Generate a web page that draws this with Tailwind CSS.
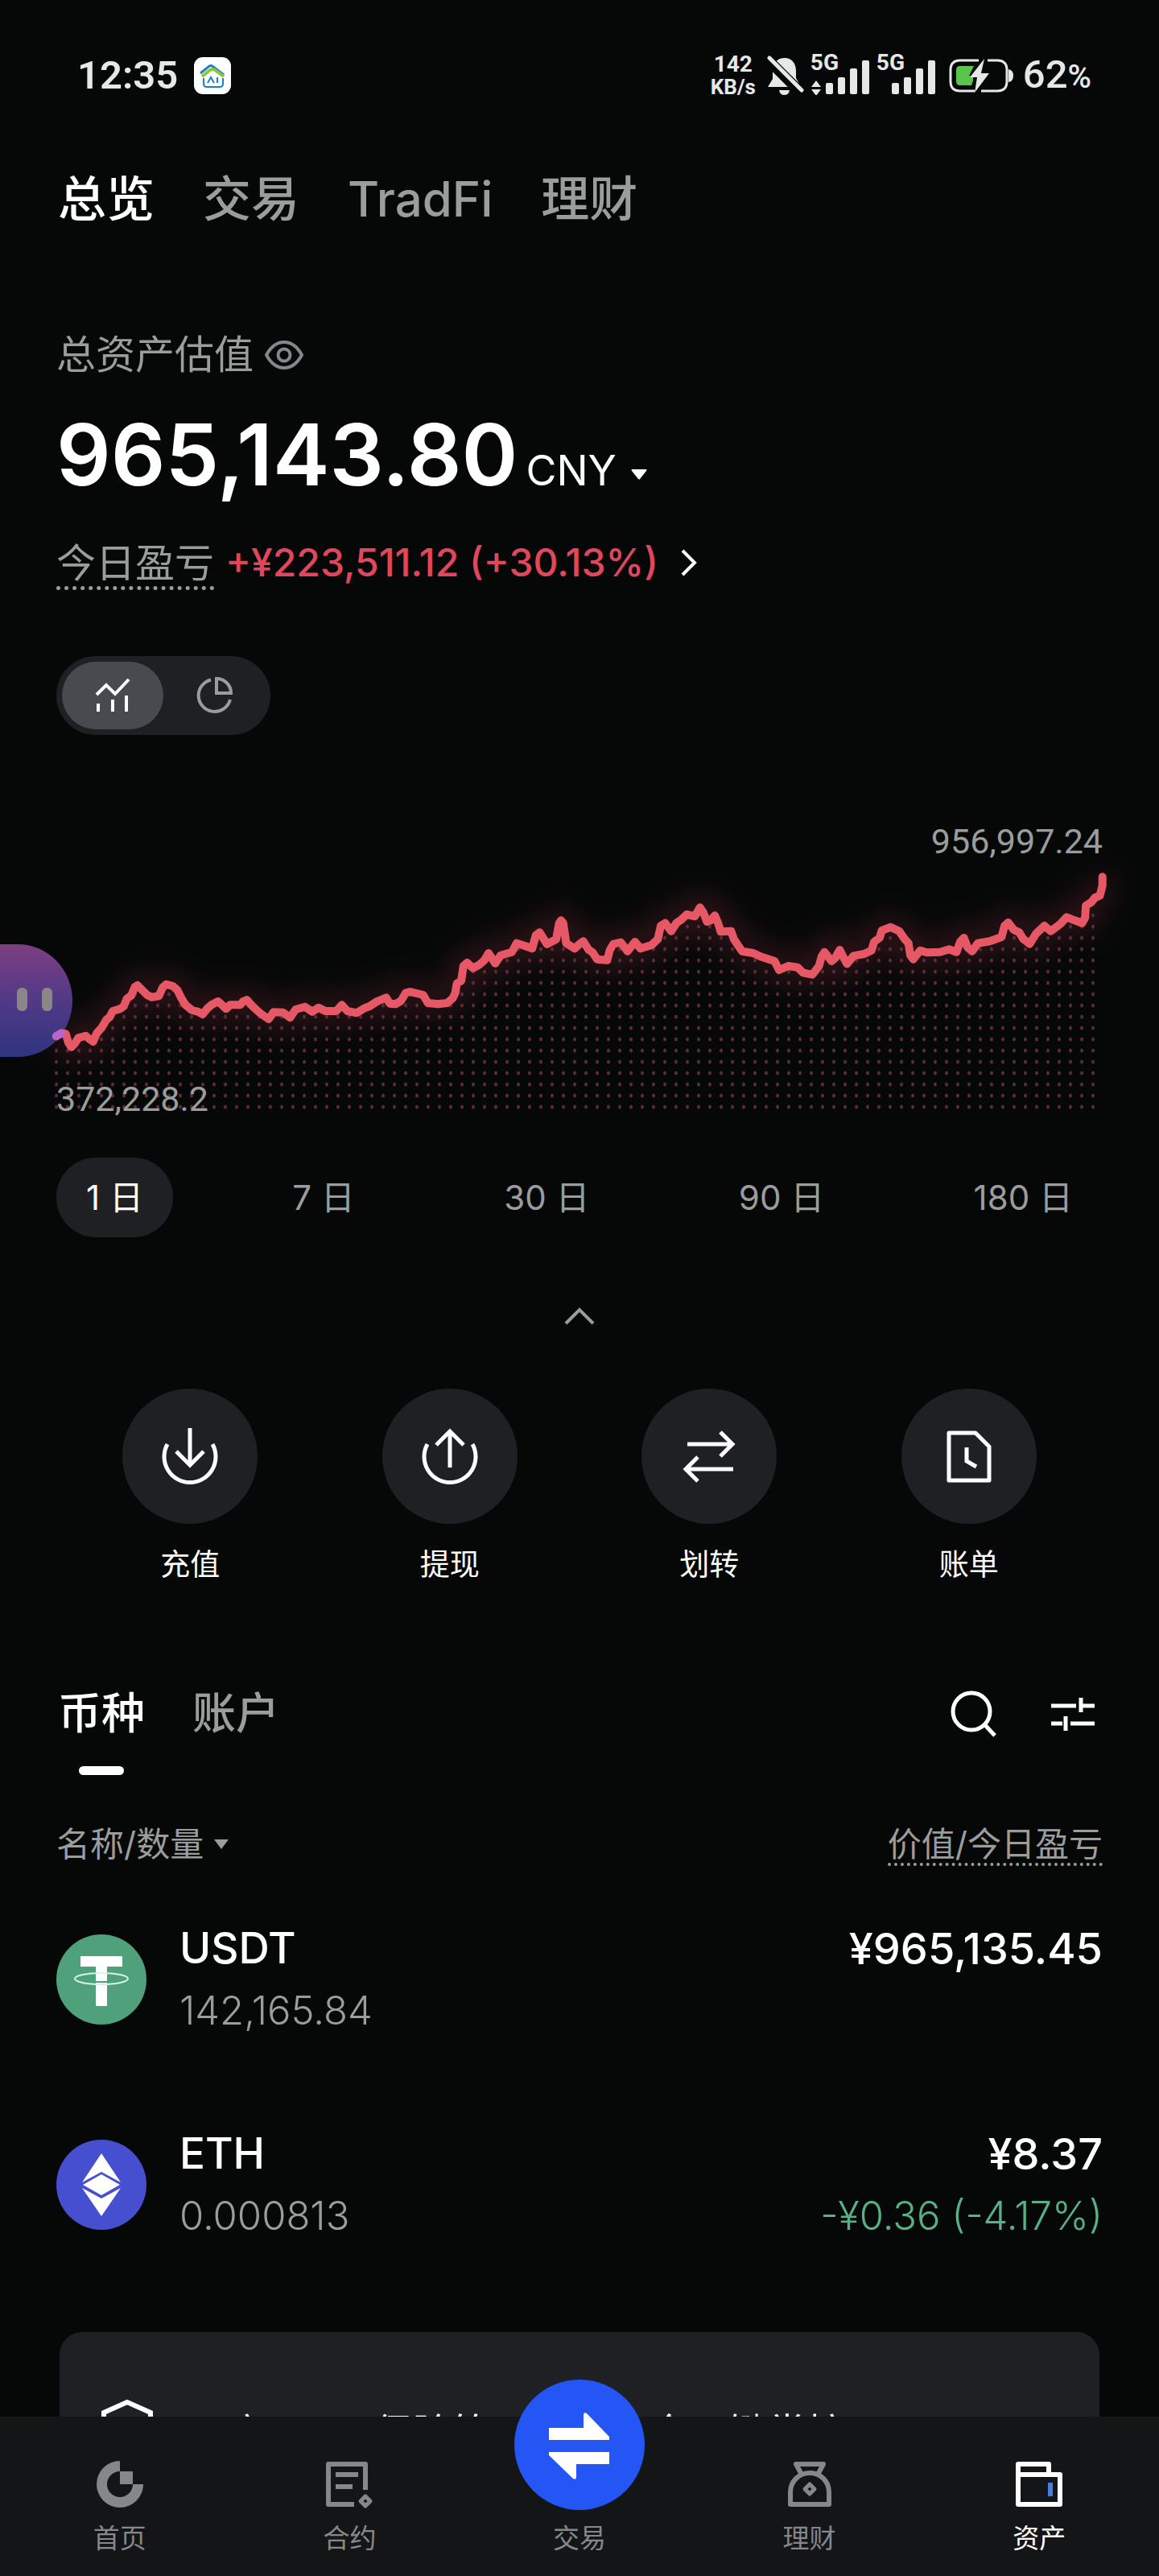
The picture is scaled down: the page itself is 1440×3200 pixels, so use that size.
<!DOCTYPE html>
<html lang="zh-CN">
<head>
    <meta charset="UTF-8">
    <meta name="viewport" content="width=device-width, initial-scale=1.0">
    <title>资产总览</title>
    <script src="https://cdn.jsdelivr.net/npm/@tailwindcss/browser@4"></script>
</head>
<body class="bg-[#060808] text-white font-['Inter','Noto_Sans_CJK_SC',sans-serif]">
<div class="relative min-h-screen overflow-hidden">

    <!-- barra de status -->
    <div class="flex h-[122px] items-center justify-between pt-[66px] pl-24 pr-[84px] text-[#e6e8e7]">
        <div class="flex items-center gap-5">
            <span class="text-[49px] leading-[56px] font-semibold font-['Roboto']">12:35</span>
            <svg class="size-[46px]" viewBox="0 0 46 46" fill="none">
                <rect width="46" height="46" rx="11" fill="#fff"/>
                <path d="M8 20l10-8q3-3 6 0l13 10" stroke="#1f7fc4" stroke-width="3"/>
                <path d="M10 24l10-8q3-2 6 0l11 8" stroke="#8cc63f" stroke-width="4"/>
                <path d="M12 26v7q0 4 4 4h16q4 0 4-4v-7" stroke="#1f7fc4" stroke-width="2"/>
                <path d="M17 32l4-7 4 7M29 25v7" stroke="#1f7fc4" stroke-width="2"/>
            </svg>
        </div>
        <div class="flex items-center">
            <div class="flex w-[60px] flex-col items-center font-bold font-['Roboto']">
                <span class="text-[28px] leading-7">142</span>
                <span class="text-[26px] leading-7">KB/s</span>
            </div>
            <svg class="ml-3 h-[50px] w-[46px]" viewBox="0 0 46 50">
                <path d="M7 29V20C7 9 13 3 22 3s14 7 14 16v9l6 11H1z" fill="#e6e8e7"/>
                <path d="M15 43h13q-1 6-6.500 6T15 43z" fill="#e6e8e7"/>
                <path d="M-2 2L42 46" stroke="#060808" stroke-width="13"/>
                <path d="M3 3L43 43" stroke="#e6e8e7" stroke-width="5" stroke-linecap="round"/>
            </svg>
            <div class="relative ml-2">
                <span class="absolute -top-1 left-0 text-[28px] leading-6 font-bold font-['Roboto']">5G</span>
                <svg class="h-12 w-[74px]" viewBox="0 0 74 48" fill="#e6e8e7">
                    <path d="M1 38l6-8 6 8zM1 41h12l-6 8z"/>
                    <rect x="19" y="33" width="9" height="14" rx="2"/><rect x="34" y="26" width="9" height="21" rx="2"/>
                    <rect x="49" y="15" width="9" height="32" rx="2"/><rect x="64" y="5" width="9" height="42" rx="2"/>
                </svg>
            </div>
            <div class="relative ml-2">
                <span class="absolute -top-1 left-0 text-[28px] leading-6 font-bold font-['Roboto']">5G</span>
                <svg class="h-12 w-[74px]" viewBox="0 0 74 48" fill="#e6e8e7">
                    <rect x="19" y="33" width="9" height="14" rx="2"/><rect x="34" y="26" width="9" height="21" rx="2"/>
                    <rect x="49" y="15" width="9" height="32" rx="2"/><rect x="64" y="5" width="9" height="42" rx="2"/>
                </svg>
            </div>
            <svg class="ml-4 h-[42px] w-20" viewBox="0 0 80 42" fill="none">
                <path d="M37 2H14Q2 2 2 14v14q0 12 12 12h18M48 2h12q12 0 12 12v14q0 12-12 12H40" stroke="#e6e8e7" stroke-width="3"/>
                <path d="M14 9h17L25 21l5 2v4l-2 6H14q-5 0-5-5V14q0-5 5-5z" fill="#5ac54b"/>
                <path d="M44 0L26 23h9L32 42 50 18H40z" fill="#e6e8e7"/>
                <path d="M74 13q6 1 6 8t-6 8z" fill="#e6e8e7"/>
            </svg>
            <span class="ml-3 text-[49px] leading-[56px] font-medium font-['Roboto']">62<span class="text-[40px]">%</span></span>
        </div>
    </div>

    <nav class="mt-[89px] flex gap-[60px] px-[72px] text-[60px] leading-[72px] font-medium text-[#9b9d9d]">
        <a href="#" class="text-white">总览</a>
        <a href="#">交易</a>
        <a href="#">TradFi</a>
        <a href="#">理财</a>
    </nav>

    <!-- patrimônio total -->
    <section class="mt-[130px] px-[70px]">
        <div class="flex items-center gap-[14px] text-[49px] leading-[56px] text-[#9b9d9d]">
            <span>总资产估值</span>
            <button aria-label="隐藏金额">
                <svg class="h-9 w-12" viewBox="0 0 48 36" fill="none" stroke="#85878a" stroke-width="4" stroke-linejoin="round">
                    <path d="M2 18C8 7 15 2 24 2s16 5 22 16c-6 11-13 16-22 16S8 29 2 18z"/>
                    <circle cx="24" cy="18" r="7.500"/>
                </svg>
            </button>
        </div>
        <div class="mt-[43px] flex items-baseline">
            <span class="text-[106px] leading-[106px] font-semibold">965,143.80</span>
            <button class="ml-[10px] flex items-center gap-[18px] text-[52px] leading-[56px]">CNY
                <svg class="mt-2 h-[13px] w-5" viewBox="0 0 20 13"><path d="M1 0h18q1 1 0 2l-8 10q-1 1-2 0L1 2Q0 1 1 0z" fill="#fff"/></svg>
            </button>
        </div>
        <div class="mt-[54px] flex items-start">
            <span class="border-b-[5px] border-dotted border-[#9b9d9d] text-[49px] leading-[56px] text-[#9b9d9d]">今日盈亏</span>
            <a href="#" class="ml-[14px] flex items-center gap-[26px] text-[48px] leading-[54px] font-medium text-[#e0465c]">+¥223,511.12 (+30.13%)
                <svg class="h-9 w-6" viewBox="0 0 24 36" fill="none" stroke="#fff" stroke-width="4"><path d="M4 3l15 15L4 33"/></svg>
            </a>
        </div>
        <div class="mt-[82px] inline-flex rounded-full bg-[#1f2024] p-[7px]">
            <button aria-label="走势" class="flex h-[84px] w-[126px] items-center justify-center rounded-full bg-[#494950]">
                <svg class="h-11 w-11" viewBox="0 0 44 44" fill="none" stroke="#fff" stroke-width="4">
                    <path d="M2 21L14 9l11 11L42 2M4 32v10M22 27v15M39 22v20"/>
                </svg>
            </button>
            <button aria-label="分布" class="flex h-[84px] w-[126px] items-center justify-center">
                <svg class="size-12" viewBox="0 0 48 48" fill="none" stroke="#9b9d9d" stroke-width="4">
                    <path d="M20 4.500A20 20 0 1 0 44 29"/>
                    <path d="M27 3v18h18A18 18 0 0 0 27 3z"/>
                </svg>
            </button>
        </div>
    </section>

    <!-- gráfico -->
    <section class="relative mt-[108px]">
        <p class="px-[70px] text-right text-[43px] leading-[49px] text-[#9b9d9d] font-['Roboto']">956,997.24</p>
        <svg class="block h-auto w-full overflow-visible" viewBox="0 0 1440 320" fill="none">
            <defs>
                <linearGradient id="mascote" x1="0" y1="0" x2="0" y2="1">
                    <stop offset="0" stop-color="#7d3f80"/>
                    <stop offset=".45" stop-color="#553a87"/>
                    <stop offset="1" stop-color="#2f3480"/>
                </linearGradient>
                <pattern id="pontos" x="63" y="4" width="14" height="14" patternUnits="userSpaceOnUse">
                    <ellipse cx="7" cy="7" rx="2" ry="2.500" fill="#5c2c36"/>
                </pattern>
                <filter id="brilho" x="0" y="-80" width="1440" height="420" filterUnits="userSpaceOnUse">
                    <feGaussianBlur stdDeviation="18"/>
                </filter>
            </defs>
            <path id="glow" stroke="#e0465c" stroke-opacity=".22" stroke-width="24" filter="url(#brilho)"/>
            <path id="area" fill="url(#pontos)"/>
            <path d="M0 103h22a68 70 0 0 1 0 140H0z" fill="url(#mascote)"/>
            <rect x="21" y="157" width="13" height="29" rx="6" fill="#8b8788"/>
            <rect x="52" y="157" width="13" height="29" rx="6" fill="#8b8788"/>
            <path id="linha" stroke="#e65866" stroke-width="10" stroke-linecap="round" stroke-linejoin="round"/>
            <path d="M70 217l6-3" stroke="#b866cf" stroke-width="10" stroke-linecap="round"/>
        </svg>
        <p class="absolute bottom-0 left-[70px] text-[43px] leading-[49px] text-[#9b9d9d] font-['Roboto']">372,228.2</p>
    </section>

    <div class="mt-12 flex justify-between px-[70px] text-[42px] leading-[98px] text-[#9b9d9d]">
        <button class="rounded-full bg-[#1f2024] px-[37px] pt-px text-white">1 日</button>
        <button class="px-[37px] pt-px">7 日</button>
        <button class="px-[37px] pt-px">30 日</button>
        <button class="px-[37px] pt-px">90 日</button>
        <button class="px-[37px] pt-px">180 日</button>
    </div>

    <button aria-label="收起" class="mx-auto mt-[78px] block">
        <svg class="h-10 w-10" viewBox="0 0 40 40" fill="none" stroke="#9b9d9d" stroke-width="4"><path d="M3 29l17-17 17 17"/></svg>
    </button>

    <!-- ações -->
    <div class="mt-[70px] grid grid-cols-4 px-[75px] text-[37px] leading-[48px]">
        <button class="flex flex-col items-center gap-[27px]">
            <span class="flex size-[168px] items-center justify-center rounded-full bg-[#1f2024]">
                <svg class="size-[84px]" viewBox="0 0 84 84" fill="none" stroke="#fff" stroke-width="5">
                    <path d="M14 27a32 32 0 1 0 56 0M42 7v46M25 36l17 17 17-17"/>
                </svg>
            </span>
            充值
        </button>
        <button class="flex flex-col items-center gap-[27px]">
            <span class="flex size-[168px] items-center justify-center rounded-full bg-[#1f2024]">
                <svg class="size-[84px]" viewBox="0 0 84 84" fill="none" stroke="#fff" stroke-width="5">
                    <path d="M14 27a32 32 0 1 0 56 0M42 56V10M25 28l17-17 17 17"/>
                </svg>
            </span>
            提现
        </button>
        <button class="flex flex-col items-center gap-[27px]">
            <span class="flex size-[168px] items-center justify-center rounded-full bg-[#1f2024]">
                <svg class="size-[84px]" viewBox="0 0 84 84" fill="none" stroke="#fff" stroke-width="5">
                    <path d="M15 27h55M56 12l15 15-15 15M72 58H14M28 43L13 58l15 15"/>
                </svg>
            </span>
            划转
        </button>
        <button class="flex flex-col items-center gap-[27px]">
            <span class="flex size-[168px] items-center justify-center rounded-full bg-[#1f2024]">
                <svg class="size-[84px]" viewBox="0 0 84 84" fill="none" stroke="#fff" stroke-width="5">
                    <path d="M17 13h33l17 17v42H17z" stroke-linejoin="round"/><path d="M39 31v17l12 7"/>
                </svg>
            </span>
            账单
        </button>
    </div>

    <!-- abas moeda / conta -->
    <div class="mt-[129px] flex items-start justify-between px-[72px]">
        <div class="flex gap-[59px] text-[54px] leading-[64px] font-medium text-[#9b9d9d]">
            <button class="flex flex-col items-center gap-[33px] text-white">币种
                <span class="h-[11px] w-14 rounded-full bg-white"></span>
            </button>
            <button class="self-start">账户</button>
        </div>
        <div class="flex h-16 items-center gap-[66px]">
            <button aria-label="搜索">
                <svg class="size-[60px]" viewBox="0 0 60 60" fill="none" stroke="#fff" stroke-width="5"><circle cx="27" cy="27" r="23"/><path d="M43 43l13 14"/></svg>
            </button>
            <button aria-label="筛选" class="mr-2">
                <svg class="h-11 w-[54px]" viewBox="0 0 54 44" fill="none" stroke="#fff" stroke-width="5"><path d="M0 12h31M37 2v18M37 12h17M0 34h14M18 25v18M24 34h30"/></svg>
            </button>
        </div>
    </div>

    <div class="mt-[63px] px-[70px]">
        <table class="w-full">
            <thead class="text-[42px] leading-[46px] text-[#9b9d9d]">
            <tr>
                <th class="pb-[13px] text-left align-top font-normal">
                    <button class="flex items-center gap-3">名称/数量
                        <svg class="h-3 w-5" viewBox="0 0 20 12"><path d="M1 0h18l-9 12z" fill="#9b9d9d"/></svg>
                    </button>
                </th>
                <th class="pb-[13px] text-right align-top font-normal">
                    <span class="inline-block border-b-4 border-dotted border-[#9b9d9d]">价值/今日盈亏</span>
                </th>
            </tr>
            </thead>
            <tbody class="leading-[77px]">
            <tr class="h-[255px]">
                <td>
                    <div class="flex items-center gap-[41px]">
                        <svg class="size-28" viewBox="0 0 112 112" fill="none">
                            <circle cx="56" cy="56" r="56" fill="#4fa17c"/>
                            <path d="M30 27h52v13H63v49H49V40H30z" fill="#fff"/>
                            <path d="M49 59h14" stroke="#4fa17c" stroke-width="2"/>
                            <ellipse cx="56" cy="55" rx="33" ry="7" stroke="#d8f3e6" stroke-width="2"/>
                        </svg>
                        <div>
                            <p class="text-[53px] font-medium">USDT</p>
                            <p class="text-[49px] font-light text-[#9b9d9d]">142,165.84</p>
                        </div>
                    </div>
                </td>
                <td class="text-right">
                    <p class="min-h-[154px] text-[54px] font-medium">¥965,135.45</p>
                </td>
            </tr>
            <tr class="h-[255px]">
                <td>
                    <div class="flex items-center gap-[41px]">
                        <svg class="size-28" viewBox="0 0 112 112">
                            <circle cx="56" cy="56" r="56" fill="#464fd0"/>
                            <path d="M56 17l24 36-24-13-24 13zM56 43l23 13-23 13-23-13zM56 95L32 60l24 13 24-13z" fill="#fff"/>
                        </svg>
                        <div>
                            <p class="text-[53px] font-medium">ETH</p>
                            <p class="text-[49px] font-light text-[#9b9d9d]">0.000813</p>
                        </div>
                    </div>
                </td>
                <td class="text-right">
                    <p class="text-[54px] font-medium">¥8.37</p>
                    <p class="text-[49px] font-light text-[#56b286]">-¥0.36 (-4.17%)</p>
                </td>
            </tr>
            </tbody>
        </table>
    </div>

    <a href="#" class="mx-[74px] mt-14 flex items-start gap-11 rounded-[28px] bg-[#1f2023] px-[52px] pt-[83px] pb-16 text-[49px] leading-[64px]">
        <svg class="h-[72px] w-16" viewBox="0 0 64 72" fill="none" stroke="#fff" stroke-width="6"><path d="M3 52V17L32 4l29 13v35L32 68z"/></svg>
        <span class="mt-[11px]">开启 OKX 保险箱，资金安全一键掌控</span>
    </a>

    <!-- navegação inferior -->
    <nav class="fixed inset-x-0 bottom-0 grid h-[198px] grid-cols-5 bg-[#141517] px-[6px] pt-[52px] text-[33px] leading-[44px] text-[#85878a]">
        <a href="#" class="flex flex-col items-center gap-[13px]">
            <svg class="size-16" viewBox="0 0 64 64" fill="#85878a">
                <path d="M32 3A29 29 0 1 0 61 32H48A16 16 0 1 1 32 16z"/><path d="M32 16h16v16H32z"/>
            </svg>
            首页
        </a>
        <a href="#" class="flex flex-col items-center gap-[13px]">
            <svg class="size-16" viewBox="0 0 64 64" fill="none" stroke="#85878a" stroke-width="6" stroke-linejoin="round">
                <path d="M38 57H6V7h46v32M15 20h28M15 35h21"/><path d="M52 47l6 6-6 6-6-6z" stroke-width="5"/>
            </svg>
            合约
        </a>
        <a href="#" class="relative flex flex-col items-center pt-[77px]">
            <svg class="absolute -top-[98px] size-[162px]" viewBox="0 0 162 162">
                <circle cx="81" cy="81" r="81" fill="#2456f6"/>
                <path d="M43 60h43V43q1-3 4-1l28 29v4H43zM118 105H77v17q-1 3-4 1L43 94v-4h75z" fill="#fff"/>
            </svg>
            交易
        </a>
        <a href="#" class="flex flex-col items-center gap-[13px]">
            <svg class="size-16" viewBox="0 0 64 64" fill="none" stroke="#85878a" stroke-width="6" stroke-linejoin="round">
                <path d="M22 20L15 7h34l-7 13"/><path d="M8 57V42C8 28 19 18 32 18s24 10 24 24v15z"/><path d="M32 32l6 6-6 6-6-6z" stroke-width="5"/>
            </svg>
            理财
        </a>
        <a href="#" class="flex flex-col items-center gap-[13px] text-white">
            <svg class="size-16" viewBox="0 0 64 64" fill="none" stroke="#fff" stroke-width="6" stroke-linejoin="round">
                <path d="M6 20V7h38v13M6 20h52v37H6z"/><path d="M46 30v17" stroke="#4a7de0"/>
            </svg>
            资产
        </a>
    </nav>
</div>

<script>

//pontos da série do dia: x em uma grade de 3136, y em 1/3 de pixel
const serie = [
  [152,862],[165,850],[178,853],[185,885],[193,902],[203,888],[212,868],[232,860],[240,870],[252,882],[262,850],[275,830],
  [288,800],[297,790],[305,768],[325,760],[335,750],[343,722],[355,710],[365,678],[372,672],[385,690],[398,708],[410,716],
  [430,712],[440,680],[450,668],[468,675],[480,690],[490,718],[502,745],[520,765],[535,770],[548,780],[560,760],[572,745],
  [590,732],[603,748],[612,760],[622,745],[650,745],[658,732],[668,726],[682,748],[695,765],[708,780],[727,798],[740,772],
  [765,773],[785,792],[800,762],[825,752],[845,770],[862,755],[880,768],[910,768],[925,745],[940,768],[965,775],[985,758],
  [1000,750],[1020,732],[1045,718],[1055,740],[1070,742],[1085,730],[1098,700],[1110,696],[1145,708],[1158,738],[1185,742],
  [1210,738],[1225,720],[1232,700],[1236,665],[1248,655],[1254,600],[1264,588],[1280,608],[1297,595],[1310,580],[1322,552],
  [1340,590],[1355,560],[1385,548],[1398,515],[1420,525],[1440,535],[1450,485],[1460,475],[1480,518],[1505,500],[1513,440],
  [1518,430],[1524,440],[1532,515],[1555,535],[1568,518],[1578,508],[1593,540],[1603,548],[1616,575],[1643,578],[1650,540],
  [1660,518],[1680,512],[1698,545],[1718,510],[1733,535],[1763,522],[1780,500],[1788,450],[1800,440],[1816,470],[1830,440],
  [1843,428],[1858,408],[1880,415],[1894,382],[1903,400],[1913,435],[1923,430],[1934,412],[1943,440],[1950,472],[1978,470],
  [1986,500],[1998,525],[2008,545],[2038,552],[2058,565],[2096,582],[2108,615],[2133,600],[2158,605],[2173,625],[2198,632],
  [2216,600],[2223,565],[2231,548],[2250,582],[2260,570],[2272,540],[2280,562],[2292,592],[2310,562],[2338,555],[2358,542],
  [2365,510],[2380,495],[2386,468],[2410,455],[2433,470],[2448,500],[2458,515],[2463,560],[2471,575],[2490,542],[2508,550],
  [2543,548],[2568,538],[2588,548],[2598,510],[2608,495],[2618,530],[2630,545],[2646,515],[2678,508],[2710,492],[2718,450],
  [2728,438],[2743,465],[2758,475],[2768,498],[2786,518],[2803,480],[2826,450],[2843,470],[2868,445],[2886,418],[2908,430],
  [2928,440],[2936,420],[2938,375],[2953,362],[2963,345],[2976,338],[2983,300],[2983,268]
];

//desenha a linha, o brilho e a área pontilhada
const pontos = serie.map(([x, y]) => `${(x * 1440 / 3136).toFixed(1)} ${(y / 3 - 70).toFixed(1)}`);
const linha = "M" + pontos.join("L");
document.getElementById("linha").setAttribute("d", linha);
document.getElementById("glow").setAttribute("d", linha);
document.getElementById("area").setAttribute("d", linha + "L1362 110V310H68V217Z");

</script>
</body>
</html>
